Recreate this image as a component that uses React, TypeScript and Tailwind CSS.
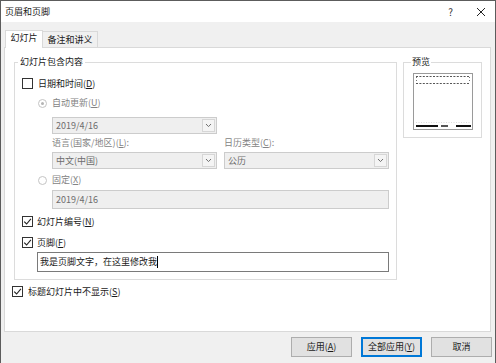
import React from "react";

const font = "font-['Noto_Sans_CJK_SC','Noto_Sans',sans-serif]";

function Check({ checked }: { checked: boolean }) {
  return (
    <span className="w-[11px] h-[11px] border border-[#333333] bg-white flex items-center justify-center shrink-0">
      {checked && (
        <svg width="9" height="9" viewBox="0 0 9 9">
          <path d="M1.2 4.6 L3.6 7 L7.9 1.8" fill="none" stroke="#222" strokeWidth="1.1" />
        </svg>
      )}
    </span>
  );
}

function Radio({ on }: { on: boolean }) {
  return (
    <span className="w-[9px] h-[9px] rounded-full border border-[#c4c4c4] bg-white flex items-center justify-center shrink-0">
      {on && <span className="w-[3px] h-[3px] rounded-full bg-[#b4b4b4]" />}
    </span>
  );
}

function Key({ k }: { k: string }) {
  return (
    <>
      (<span className="underline underline-offset-1">{k}</span>)
    </>
  );
}

function Combo({ value, className }: { value: string; className: string }) {
  return (
    <div className={`h-[17px] border border-[#cccccc] bg-[#efefef] flex items-center ${className}`}>
      <span className="flex-1 pl-[3px] text-[#6d6d6d]">{value}</span>
      <span className="w-[13px] h-[13px] mr-px border border-[#d6d6d6] bg-[#f4f4f4] flex items-center justify-center">
        <svg width="7" height="5" viewBox="0 0 7 5">
          <path d="M1 1 L3.5 3.6 L6 1" fill="none" stroke="#707070" strokeWidth="1" />
        </svg>
      </span>
    </div>
  );
}

function Button({ label, k, focus }: { label: string; k: string; focus?: boolean }) {
  return (
    <div
      className={`w-[61px] h-[20px] flex items-center justify-center bg-[#e1e1e1] border ${
        focus ? "border-[#0078d7] shadow-[inset_0_0_0_1px_#0078d7]" : "border-[#adadad]"
      }`}
    >
      {label}
      {k && <Key k={k} />}
    </div>
  );
}

function PreviewPage() {
  return (
    <svg width="60" height="57" viewBox="0 0 60 57">
      <rect x="0.5" y="0.5" width="59" height="56" fill="#fff" stroke="#9a9a9a" />
      <line x1="3" y1="3.5" x2="57" y2="3.5" stroke="#555" strokeDasharray="2 1.4" />
      <line x1="3" y1="10.5" x2="57" y2="10.5" stroke="#555" strokeDasharray="2 1.4" />
      <line x1="3.5" y1="4" x2="3.5" y2="10" stroke="#777" strokeDasharray="1 2" />
      <line x1="56.5" y1="4" x2="56.5" y2="10" stroke="#777" strokeDasharray="1 2" />
      <line x1="3" y1="49.5" x2="57" y2="49.5" stroke="#ddd" strokeDasharray="1 1.5" />
      <rect x="3" y="52" width="22" height="2" fill="#111" />
      <rect x="28" y="52" width="7" height="2" fill="#555" />
      <rect x="43" y="52" width="15" height="2" fill="#111" />
    </svg>
  );
}

export default function App() {
  return (
    <div className={`w-[496px] h-[363px] flex flex-col bg-[#f0f0f0] border-x border-t border-[#5c5c5c] text-[9px] leading-[12px] text-[#1a1a1a] ${font}`}>
      {/* title bar */}
      <div className="h-[21px] bg-white flex items-center justify-between pl-[4px] pr-[9px]">
        <span>页眉和页脚</span>
        <div className="flex items-center gap-[23px]">
          <span className="text-[10px] text-[#333]">?</span>
          <svg width="10" height="10" viewBox="0 0 10 10">
            <path d="M1 1 L9 9 M9 1 L1 9" stroke="#222" strokeWidth="1" />
          </svg>
        </div>
      </div>

      {/* tabs */}
      <div className="h-[25px] flex items-end pl-[4px]">
        <div className="relative z-10 -mb-px h-[18px] w-[38px] bg-white border border-b-0 border-[#d9d9d9] flex justify-center pt-[1px]">
          幻灯片
        </div>
        <div className="h-[16px] w-[55px] border border-l-0 border-b-0 border-[#d9d9d9] flex justify-center pt-[2px]">
          备注和讲义
        </div>
      </div>

      {/* pane */}
      <div className="h-[285px] ml-[3px] mr-[4px] bg-white border border-[#d9d9d9] flex flex-col">
        <div className="flex items-start pl-[9px] mt-[14px]">
          {/* main group */}
          <div className="w-[383px] border border-[#dcdcdc] flex flex-col pl-[7px] pb-[7px]">
            <span className="-mt-[7px] -ml-[4px] w-fit bg-white px-[2px]">幻灯片包含内容</span>

            <div className="mt-[8px] h-[15px] flex items-center gap-[5px]">
              <Check checked={false} />
              <span>
                日期和时间<Key k="D" />
              </span>
            </div>

            <div className="mt-[5px] h-[14px] flex items-center gap-[5px] pl-[16px] text-[#838383]">
              <Radio on />
              <span>
                自动更新<Key k="U" />
              </span>
            </div>

            <div className="pl-[30px] mt-[7px]">
              <Combo value="2019/4/16" className="w-[165px]" />
            </div>

            <div className="mt-[3px] h-[12px] flex pl-[30px] text-[#838383]">
              <span className="w-[172px]">
                语言(国家/地区)<Key k="L" />:
              </span>
              <span>
                日历类型<Key k="C" />:
              </span>
            </div>

            <div className="mt-[3px] flex gap-[7px] pl-[30px]">
              <Combo value="中文(中国)" className="w-[165px]" />
              <Combo value="公历" className="w-[165px]" />
            </div>

            <div className="mt-[4px] h-[14px] flex items-center gap-[5px] pl-[16px] text-[#838383]">
              <Radio on={false} />
              <span>
                固定<Key k="X" />
              </span>
            </div>

            <div className="pl-[30px] mt-[3px]">
              <div className="w-[337px] h-[19px] border border-[#cccccc] bg-[#efefef] flex items-center pl-[3px] text-[#6d6d6d]">
                2019/4/16
              </div>
            </div>

            <div className="mt-[5px] h-[15px] flex items-center gap-[4px]">
              <Check checked />
              <span>
                幻灯片编号<Key k="N" />
              </span>
            </div>

            <div className="mt-[6px] h-[15px] flex items-center gap-[4px]">
              <Check checked />
              <span>
                页脚<Key k="F" />
              </span>
            </div>

            <div className="pl-[15px] mt-[2px]">
              <div className="w-[352px] h-[20px] border border-[#7a7a7a] bg-white flex items-center pl-[2px]">
                <span>我是页脚文字，在这里修改我</span>
                <span className="w-px h-[12px] bg-black" />
              </div>
            </div>
          </div>

          {/* preview group */}
          <div className="ml-[6px] w-[79px] h-[76px] border border-[#dcdcdc] flex flex-col items-start pl-[9px]">
            <span className="-mt-[7px] -ml-[2px] bg-white px-[1px]">预览</span>
            <div className="mt-[5px]">
              <PreviewPage />
            </div>
          </div>
        </div>

        <div className="mt-[4px] h-[15px] flex items-center gap-[5px] pl-[7px]">
          <Check checked />
          <span>
            标题幻灯片中不显示<Key k="S" />
          </span>
        </div>
      </div>

      {/* buttons */}
      <div className="h-[31px] flex justify-end items-start pt-[5px] pr-[3px] gap-[9px]">
        <Button label="应用" k="A" />
        <Button label="全部应用" k="Y" focus />
        <Button label="取消" k="" />
      </div>
    </div>
  );
}
